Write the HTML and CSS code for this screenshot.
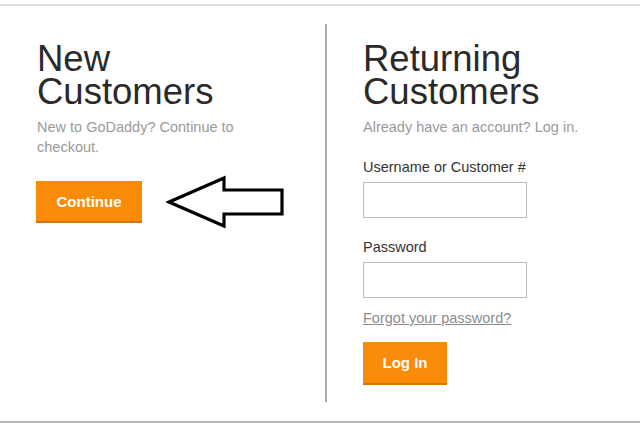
FILE: index.html
```html
<!DOCTYPE html>
<html lang="en">
<head>
    <meta charset="UTF-8">
    <title>Checkout Sign In</title>
    <link rel="stylesheet" href="styles.css">
</head>

<body>
    <div class="frame">
        <div class="columns">
            <div class="col col-new">
                <h1><span>New</span><span>Customers</span></h1>
                <p class="sub narrow">New to GoDaddy? Continue to checkout.</p>

                <div class="action-row">
                    <button class="btn btn-continue">Continue</button>
                    <svg class="arrow" width="120" height="54" viewBox="0 0 120 54">
                        <path d="M3 27 L58 3 L58 15 L116 15 L116 39 L58 39 L58 51 Z"
                              fill="#fff" stroke="#000" stroke-width="3.2" stroke-linejoin="miter"/>
                    </svg>
                </div>
            </div>

            <div class="col col-returning">
                <h1><span>Returning</span><span>Customers</span></h1>
                <p class="sub">Already have an account? Log in.</p>

                <form class="login-form" onsubmit="return false;">
                    <label for="username" class="first">Username or Customer #</label>
                    <input type="text" id="username">

                    <label for="password">Password</label>
                    <input type="password" id="password">

                    <a href="#" class="forgot">Forgot your password?</a>

                    <button class="btn btn-login">Log In</button>
                </form>
            </div>
        </div>
    </div>
</body>
</html>
```

FILE: styles.css
```css
body {
    font-family: "Liberation Sans", Arial, sans-serif;
    margin: 0;
    background-color: #fff;
}

.frame {
    margin-top: 4px;
    border-top: 2px solid #dcdcdc;
    border-bottom: 2px solid #b8b8b8;
}

.columns {
    display: grid;
    grid-template-columns: 325px 1fr;
    margin: 18px 0 19px;
}

.col {
    padding-top: 18px;
}

.col-new {
    padding-left: 37px;
}

.col-returning {
    border-left: 2px solid #a9a9a9;
    padding-left: 36px;
    padding-bottom: 17px;
}

h1 {
    margin: 0;
    font-size: 36.5px;
    font-weight: normal;
    color: #2a2a2a;
}

h1 span {
    display: block;
    height: 33px;
    line-height: 33px;
}

.sub {
    margin: 9px 0 0;
    font-size: 14.5px;
    line-height: 20px;
    color: #9a9a9a;
}

.sub.narrow {
    max-width: 230px;
}

.action-row {
    display: flex;
    align-items: center;
    gap: 24px;
    margin-top: 18px;
    margin-left: -1px;
}

.arrow {
    display: block;
}

.btn {
    font-family: "Liberation Sans", Arial, sans-serif;
    font-size: 15px;
    font-weight: bold;
    color: #fff;
    background-color: #fa8b08;
    border: none;
    border-bottom: 2px solid #d6740a;
    padding: 0;
    cursor: pointer;
}

.btn-continue {
    width: 106px;
    height: 42px;
}

.login-form {
    display: flex;
    flex-direction: column;
    align-items: flex-start;
}

.login-form label {
    font-size: 14.5px;
    line-height: 20px;
    color: #333;
    margin: 19px 0 5px;
}

.login-form label.first {
    margin-top: 20px;
}

.login-form input {
    width: 164px;
    height: 36px;
    box-sizing: border-box;
    border: 1px solid #bdbdbd;
    margin: 0;
}

.forgot {
    margin-top: 10px;
    font-size: 14.5px;
    line-height: 20px;
    color: #8c8c8c;
}

.btn-login {
    margin-top: 14px;
    width: 84px;
    height: 43px;
}
```
